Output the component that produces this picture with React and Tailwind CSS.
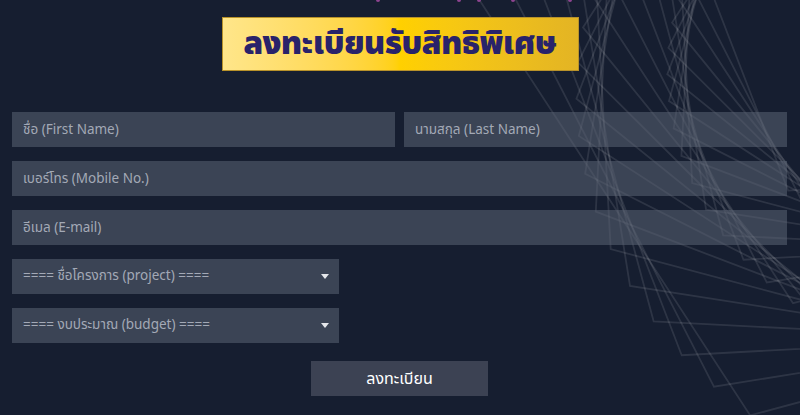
// decorative spiral of rotated pentagons, top-right of the page
const pentagons = (() => {
  const out = [];
  const cx = 905;
  const cy = 10;
  for (let i = 0; i < 27; i++) {
    const deg = i * 6;
    const r = 434 * Math.exp(-0.0045 * deg);
    const a0 = 110.9 + deg;
    const pts = [0, 1, 2, 3, 4].map((k) => {
      const t = ((a0 + k * 72) * Math.PI) / 180;
      return `${(cx + r * Math.cos(t)).toFixed(1)},${(cy + r * Math.sin(t)).toFixed(1)}`;
    });
    out.push(pts.join(' '));
  }
  return out;
})();

function Field({ placeholder, className = '' }) {
  return (
    <input
      type="text"
      placeholder={placeholder}
      className={`h-[35px] bg-[#5b6475]/55 px-[11px] text-[13.5px] text-white outline-none placeholder:text-[#a3a9b6] ${className}`}
    />
  );
}

function Select({ label }) {
  return (
    <div className="flex h-[35px] w-[327px] items-center justify-between bg-[#5b6475]/55 pl-[11px] pr-[10px] text-[13.5px] text-[#a3a9b6]">
      <span>{label}</span>
      <svg width="8" height="5" viewBox="0 0 8 5">
        <path d="M0 0h8L4 5z" fill="#e5e7eb" />
      </svg>
    </div>
  );
}

export default function App() {
  return (
    <div
      className="relative h-[415px] w-[800px] overflow-hidden bg-[#161e30]"
      style={{ fontFamily: '"Noto Sans Thai", "Noto Sans", Tahoma, sans-serif' }}
    >
      <svg className="absolute inset-0" width="800" height="415">
        {pentagons.map((p, i) => (
          <polygon key={i} points={p} fill="none" stroke="#ffffff" strokeOpacity="0.1" strokeWidth="1.8" />
        ))}
      </svg>

      <div className="absolute left-0 top-0 h-[2px] w-full">
        <span className="absolute left-[376px] h-[2px] w-[4px] rounded-b bg-[#8e4490]" />
        <span className="absolute left-[457px] h-[2px] w-[4px] rounded-b bg-[#8e4490]" />
        <span className="absolute left-[477px] h-[2px] w-[4px] rounded-b bg-[#8e4490]" />
        <span className="absolute left-[511px] h-[2px] w-[4px] rounded-b bg-[#8e4490]" />
        <span className="absolute left-[568px] h-[2px] w-[4px] rounded-b bg-[#8e4490]" />
      </div>

      <div className="relative flex flex-col pt-[17px]">
        <div className="mx-auto flex h-[54px] w-[357px] items-center justify-center border border-[#b8922a] bg-gradient-to-r from-[#ffe68a] via-[#ffd000] to-[#e3b424]">
          <span className="text-[32px] font-black leading-none tracking-[-0.5px] text-[#29236a]">ลงทะเบียนรับสิทธิพิเศษ</span>
        </div>

        <form className="mt-[41px] flex flex-col gap-[14px] pl-[12px] pr-[13px]">
          <div className="flex gap-[9px]">
            <Field placeholder="ชื่อ (First Name)" className="w-[383px]" />
            <Field placeholder="นามสกุล (Last Name)" className="w-[383px]" />
          </div>
          <Field placeholder="เบอร์โทร (Mobile No.)" className="w-full" />
          <Field placeholder="อีเมล (E-mail)" className="w-full" />
          <Select label="==== ชื่อโครงการ (project) ====" />
          <Select label="==== งบประมาณ (budget) ====" />
          <button
            type="button"
            className="mx-auto mt-[4px] h-[35px] w-[177px] bg-[#3c4253] text-[16px] text-white"
          >
            ลงทะเบียน
          </button>
        </form>
      </div>
    </div>
  );
}
